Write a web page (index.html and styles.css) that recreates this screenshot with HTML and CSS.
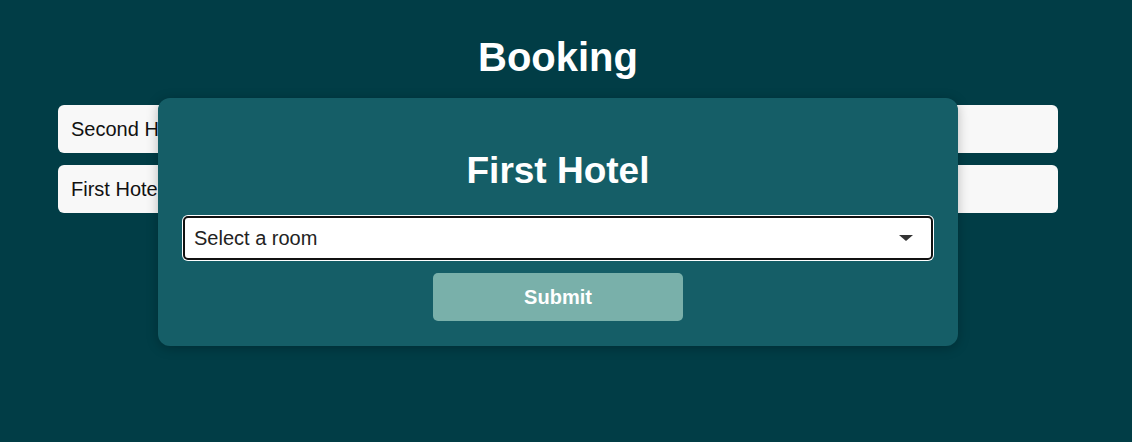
FILE: index.html
```html
<!DOCTYPE html>
<html lang="en">
<head>
<meta charset="utf-8">
<title>Booking</title>
<link rel="stylesheet" href="styles.css">
</head>
<body>
<div class="page">
  <h1 class="title">Booking</h1>
  <ul class="hotel-list">
    <li class="hotel-item">Second Hotel</li>
    <li class="hotel-item">First Hotel</li>
  </ul>
  <div class="modal">
    <h2 class="modal-title">First Hotel</h2>
    <div class="select-wrap">
      <select class="room-select">
        <option>Select a room</option>
      </select>
    </div>
    <button class="submit-btn" type="button">Submit</button>
  </div>
</div>
</body>
</html>
```

FILE: styles.css
```css
* { box-sizing: border-box; }
html, body {
  margin: 0;
  background: #013d46;
  height: 100%;
}
body {
  font-family: "Liberation Sans", Arial, sans-serif;
}
.page {
  position: relative;
  width: 1116px;
  padding-top: 35px;
}
.title {
  margin: 0 0 25px;
  text-align: center;
  color: #ffffff;
  font-size: 40px;
  font-weight: 700;
}
.hotel-list {
  list-style: none;
  margin: 0 auto;
  padding: 0;
  width: 1000px;
  display: flex;
  flex-direction: column;
  gap: 12px;
}
.hotel-item {
  background: #f8f8f8;
  border-radius: 6px;
  height: 48px;
  padding: 0 13px;
  display: flex;
  align-items: center;
  font-size: 20px;
  color: #111;
}
.modal {
  position: absolute;
  top: 98px;
  left: 158px;
  width: 800px;
  background: #155e67;
  border-radius: 12px;
  padding: 25px 25px 25px;
  display: flex;
  flex-direction: column;
  align-items: center;
  box-shadow: 0 2px 12px rgba(0, 0, 0, 0.25);
}
.modal-title {
  margin: 27px 0 24px;
  color: #ffffff;
  font-size: 37px;
  font-weight: 700;
}
.select-wrap {
  position: relative;
  width: 750px;
}
.select-wrap::after {
  content: "";
  position: absolute;
  right: 20px;
  top: 19px;
  border-left: 7px solid transparent;
  border-right: 7px solid transparent;
  border-top: 6px solid #333;
  pointer-events: none;
}
.room-select {
  -webkit-appearance: none;
  appearance: none;
  width: 100%;
  height: 44px;
  border: 2px solid #111;
  border-radius: 5px;
  box-shadow: 0 0 0 1px #ffffff;
  background: #ffffff;
  padding: 0 9px;
  font-family: "Liberation Sans", Arial, sans-serif;
  font-size: 20px;
  color: #222;
  outline: none;
}
.submit-btn {
  margin-top: 13px;
  width: 250px;
  height: 48px;
  border: none;
  border-radius: 5px;
  background: #79b0aa;
  color: #ffffff;
  font-family: "Liberation Sans", Arial, sans-serif;
  font-size: 20px;
  font-weight: 700;
}
```
